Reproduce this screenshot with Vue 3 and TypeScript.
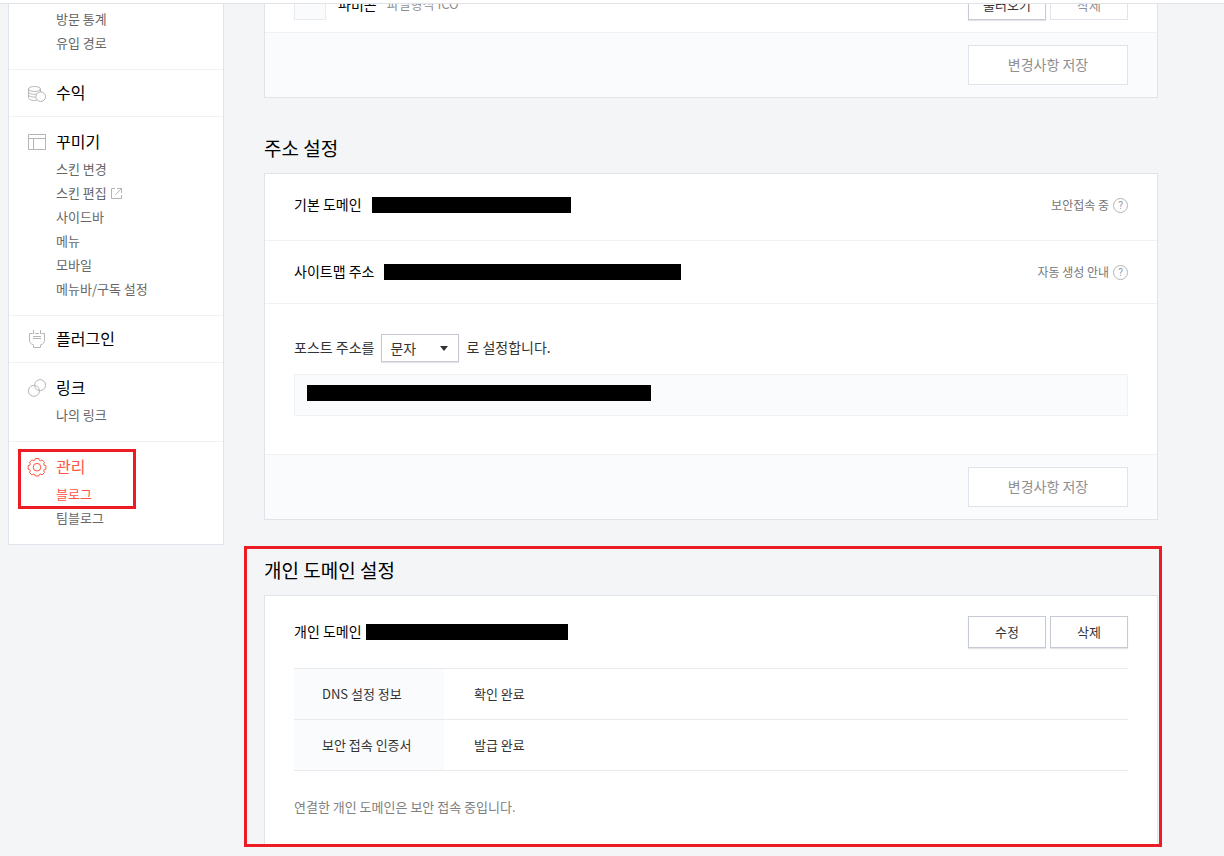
<script setup lang="ts">
import { ref } from 'vue'

interface MenuItem {
  label: string
  external?: boolean
  active?: boolean
}

interface MenuGroup {
  icon: 'none' | 'coins' | 'layout' | 'plug' | 'link' | 'gear'
  title?: string
  active?: boolean
  items: MenuItem[]
}

const groups: MenuGroup[] = [
  { icon: 'none', items: [{ label: '방문 통계' }, { label: '유입 경로' }] },
  { icon: 'coins', title: '수익', items: [] },
  {
    icon: 'layout',
    title: '꾸미기',
    items: [
      { label: '스킨 변경' },
      { label: '스킨 편집', external: true },
      { label: '사이드바' },
      { label: '메뉴' },
      { label: '모바일' },
      { label: '메뉴바/구독 설정' },
    ],
  },
  { icon: 'plug', title: '플러그인', items: [] },
  { icon: 'link', title: '링크', items: [{ label: '나의 링크' }] },
  {
    icon: 'gear',
    title: '관리',
    active: true,
    items: [{ label: '블로그', active: true }, { label: '팀블로그' }],
  },
]

const postUrlType = ref('문자')
</script>

<template>
  <div class="page">
    <header class="topbar"></header>
    <div class="layout">
      <nav class="sidebar">
        <section
          v-for="(group, i) in groups"
          :key="i"
          class="group"
          :class="{ 'has-items': group.items.length > 0, untitled: !group.title }"
        >
          <a v-if="group.title" href="#" class="group-title" :class="{ active: group.active }">
            <svg class="icon" width="20" height="20" viewBox="0 0 20 20" fill="none" stroke="currentColor" aria-hidden="true">
              <template v-if="group.icon === 'coins'">
                <ellipse cx="7.500" cy="6" rx="6" ry="2.500" />
                <path d="M1.500 6v2.800c0 1.400 2.700 2.500 6 2.500.8 0 1.500-.1 2.200-.2M13.500 6v3M1.500 8.800v2.800c0 1.400 2.700 2.500 6 2.500h1M1.500 11.600v3c0 1.600 2.700 2.900 6 2.900.8 0 1.500-.1 2.200-.2" />
                <circle cx="13.700" cy="13.700" r="4.800" />
              </template>
              <template v-else-if="group.icon === 'layout'">
                <path d="M1.500 2.500h17v15h-17zM1.500 6.500h17M6.500 6.500v11" />
              </template>
              <template v-else-if="group.icon === 'plug'">
                <path d="M6.500 1v4M13.500 1v4M5.500 4.500h-3v7c0 2 1.500 3.500 4 4.500v2.500h7V16c2.500-1 4-2.500 4-4.500v-7h-3M8 4.500h4M6 7.500h8M6 9.500h8" />
              </template>
              <template v-else-if="group.icon === 'link'">
                <path d="M8.100 9.400a5.500 5.500 0 1 1 3.200 2.900" />
                <path d="M11.900 10.600a5.500 5.500 0 1 1-3.200-2.900" />
                <path d="M8.700 7.700c1.700.5 2.700 1.500 3.200 2.900M8.100 9.400c.6 1.500 1.700 2.500 3.200 2.900" />
              </template>
              <template v-else>
                <path d="M8.300 1.500h3.400l.6 1.800 1.100.4 1.700-.8 2.400 2.400-.8 1.700.4 1.100 1.800.6v3.400l-1.800.6-.4 1.100.8 1.700-2.400 2.400-1.700-.8-1.100.4-.6 1.500H8.300l-.6-1.500-1.100-.4-1.700.8-2.400-2.400.8-1.700-.4-1.100-1.800-.6V8.700l1.800-.6.4-1.100-.8-1.700 2.400-2.400 1.700.8 1.100-.4z" />
                <circle cx="10" cy="10.200" r="3.800" />
              </template>
            </svg>
            <span class="title-text">{{ group.title }}</span>
          </a>
          <ul v-if="group.items.length" class="items">
            <li v-for="item in group.items" :key="item.label">
              <a href="#" :class="{ active: item.active }">
                {{ item.label }}
                <svg v-if="item.external" class="external" width="11" height="11" viewBox="0 0 11 11" fill="none" stroke="currentColor" aria-hidden="true">
                  <path d="M4 .5H.5v10h10V7M6 .5h4.500V5M10.500.5l-6 6" />
                </svg>
              </a>
            </li>
          </ul>
          <span v-if="group.active" class="marker menu-marker"></span>
        </section>
      </nav>

      <main class="content">
        <section class="panel first">
          <div class="favicon-row">
            <span class="favicon"></span>
            <span class="favicon-name">파비콘</span>
            <span class="favicon-hint">파일형식 ICO</span>
            <div class="actions">
              <button type="button" class="btn">불러오기</button>
              <button type="button" class="btn" disabled>삭제</button>
            </div>
          </div>
          <footer class="panel-footer">
            <button type="button" class="save" disabled>변경사항 저장</button>
          </footer>
        </section>

        <section class="block">
          <h2>주소 설정</h2>
          <div class="panel">
            <div class="row base-row">
              <span class="label">기본 도메인</span>
              <span class="redacted base-domain"></span>
              <span class="help">보안접속 중<button type="button" class="question">?</button></span>
            </div>
            <div class="row sitemap-row">
              <span class="label">사이트맵 주소</span>
              <span class="redacted sitemap"></span>
              <span class="help">자동 생성 안내<button type="button" class="question">?</button></span>
            </div>
            <div class="post-row">
              <div class="post-line">
                <label for="post-url">포스트 주소를</label>
                <span class="select-box">
                  <select id="post-url" v-model="postUrlType">
                    <option>문자</option>
                    <option>숫자</option>
                  </select>
                  <svg class="caret" width="8" height="5" viewBox="0 0 8 5" aria-hidden="true"><path d="M0 0h8L4 5z" fill="#333" /></svg>
                </span>
                <span class="post-suffix">로 설정합니다.</span>
              </div>
              <div class="sample"><span class="redacted sample-url"></span></div>
            </div>
            <footer class="panel-footer">
              <button type="button" class="save" disabled>변경사항 저장</button>
            </footer>
          </div>
        </section>

        <section class="block">
          <h2>개인 도메인 설정</h2>
          <div class="panel domain-panel">
            <div class="domain-line">
              <span class="label">개인 도메인</span>
              <span class="redacted own-domain"></span>
              <div class="actions">
                <button type="button" class="btn">수정</button>
                <button type="button" class="btn">삭제</button>
              </div>
            </div>
            <table>
              <tbody>
                <tr>
                  <th scope="row">DNS 설정 정보</th>
                  <td>확인 완료</td>
                </tr>
                <tr>
                  <th scope="row">보안 접속 인증서</th>
                  <td>발급 완료</td>
                </tr>
              </tbody>
            </table>
            <p>연결한 개인 도메인은 보안 접속 중입니다.</p>
          </div>
          <span class="marker domain-marker"></span>
        </section>
      </main>
    </div>
  </div>
</template>

<style>
body {
  background: #f3f5f7;
}
</style>

<style scoped>
.page,
.page * {
  box-sizing: border-box;
}
.page {
  color: #333;
  font-family: "Noto Sans CJK KR", sans-serif;
  font-size: 14px;
  line-height: 20px;
}
.topbar {
  height: 4px;
  background: #fff;
  border-bottom: 1px solid #e1e2e6;
}
.layout {
  display: flex;
  align-items: flex-start;
  gap: 40px;
  padding: 0 66px 9px 8px;
}
a {
  color: inherit;
  text-decoration: none;
}
button,
select {
  font-family: inherit;
  margin: 0;
}

/* sidebar */
.sidebar {
  flex: none;
  width: 216px;
  background: #fff;
  border: 1px solid #e0e2ec;
  border-top: 0;
}
.group {
  position: relative;
  border-bottom: 1px solid #f0f1f5;
}
.group:last-child {
  border-bottom: 0;
}
.has-items {
  padding: 10px 0 14px;
}
.untitled {
  padding-top: 3px;
}
.group-title {
  display: flex;
  align-items: center;
  gap: 9px;
  height: 46px;
  padding-left: 18px;
  color: #000;
  font-size: 16px;
}
.has-items .group-title {
  height: 30px;
}
.title-text,
.label,
.post-line label,
.post-suffix {
  padding-bottom: 2px;
}
.icon {
  flex: none;
  color: #b5b5b5;
}
.items {
  margin: 0;
  padding: 0 0 0 47px;
  list-style: none;
  color: #666;
  font-size: 13px;
  line-height: 24px;
}
.items li {
  height: 24px;
}
.items a {
  display: flex;
  align-items: center;
  gap: 4px;
}
.external {
  color: #b5b5b5;
}
.group-title.active,
.group-title.active .icon,
.items .active {
  color: #ff5544;
}

/* content */
.content {
  flex: 1;
  min-width: 0;
}
.panel {
  background: #fff;
  border: 1px solid #e0e3ea;
}
.first {
  border-top: 0;
}
.block {
  position: relative;
  padding-top: 35px;
}
h2 {
  margin: 0 0 10px;
  color: #000;
  font-size: 19px;
  font-weight: 400;
  line-height: 30px;
}
.favicon-row {
  display: flex;
  align-items: flex-end;
  height: 28px;
  padding: 0 29px 12px;
  overflow: hidden;
  line-height: 32px;
}
.favicon {
  width: 32px;
  height: 32px;
  margin-right: 12px;
  background: #fafbfd;
  border: 1px solid #e8eaef;
}
.favicon-name {
  margin-right: 10px;
  color: #000;
}
.favicon-hint {
  color: #909090;
  font-size: 13px;
}
.actions {
  display: flex;
  gap: 4px;
  margin-left: auto;
}
.btn {
  width: 78px;
  height: 32px;
  padding: 0 0 2px;
  background: #fff;
  border: 1px solid #c5cad5;
  box-shadow: 0 1px 1px #0000001a;
  color: #333;
  font-size: 13px;
}
.favicon-row .btn {
  padding: 0;
}
.btn:disabled {
  border-color: #e0e4ed;
  box-shadow: none;
  color: #909090;
}
.panel-footer {
  display: flex;
  justify-content: flex-end;
  padding: 12px 29px;
  background: #fafbfd;
  border-top: 1px solid #f0f1f5;
}
.save {
  width: 160px;
  height: 40px;
  padding: 0 0 2px;
  background: #fff;
  border: 1px solid #e0e4ed;
  color: #909090;
  font-size: 14px;
}
.row {
  display: flex;
  align-items: center;
  gap: 10px;
  height: 62px;
  padding: 0 29px;
}
.base-row {
  height: 67px;
  padding-bottom: 4px;
  border-bottom: 1px solid #f0f1f5;
}
.label {
  color: #000;
}
.redacted {
  height: 16px;
  background: #000;
}
.base-domain {
  width: 199px;
}
.sitemap {
  width: 297px;
}
.own-domain {
  width: 202px;
}
.sample-url {
  display: block;
  width: 344px;
}
.help {
  display: flex;
  align-items: center;
  gap: 4px;
  margin-left: auto;
  color: #777;
  font-size: 12px;
}
.question {
  width: 15px;
  height: 15px;
  padding: 0;
  background: none;
  border: 1px solid #b5b5b5;
  border-radius: 50%;
  color: #999;
  font-family: Roboto, sans-serif;
  font-size: 10px;
  line-height: 13px;
}
.post-row {
  padding: 30px 29px 38px;
  border-top: 1px solid #f0f1f5;
}
.post-line {
  display: flex;
  align-items: center;
  gap: 7px;
  margin-bottom: 12px;
}
.select-box {
  position: relative;
  display: flex;
}
select {
  width: 78px;
  height: 28px;
  padding: 0 8px;
  appearance: none;
  background: #fff;
  border: 1px solid #c5cad5;
  border-radius: 0;
  box-shadow: 0 1px 1px #0000001a;
  color: #333;
  font-size: 14px;
}
.caret {
  position: absolute;
  top: 12px;
  right: 11px;
  pointer-events: none;
}
.sample {
  padding: 10px 12px 14px;
  background: #fafbfd;
  border: 1px solid #f0f1f5;
}
.domain-panel {
  padding: 20px 29px 29px;
}
.domain-line {
  display: flex;
  align-items: center;
  gap: 4px;
  margin-bottom: 20px;
}
table {
  width: 100%;
  border-collapse: collapse;
  font-size: 13px;
}
tr {
  border-top: 1px solid #e8eaee;
  border-bottom: 1px solid #e8eaee;
}
th,
td {
  height: 51px;
  padding: 0 30px;
  text-align: left;
  font-weight: 400;
}
th {
  width: 150px;
  padding: 0 0 0 28px;
  background: #fafbfd;
}
p {
  margin: 26px 0 0;
  color: #808080;
  font-size: 13px;
}

/* callout frames */
.marker {
  position: absolute;
  border: 3px solid #ed1c24;
  pointer-events: none;
}
.menu-marker {
  top: 7px;
  left: 9px;
  width: 118px;
  height: 60px;
}
.domain-marker {
  top: 26px;
  right: -4px;
  bottom: 0;
  left: -20px;
}
</style>
